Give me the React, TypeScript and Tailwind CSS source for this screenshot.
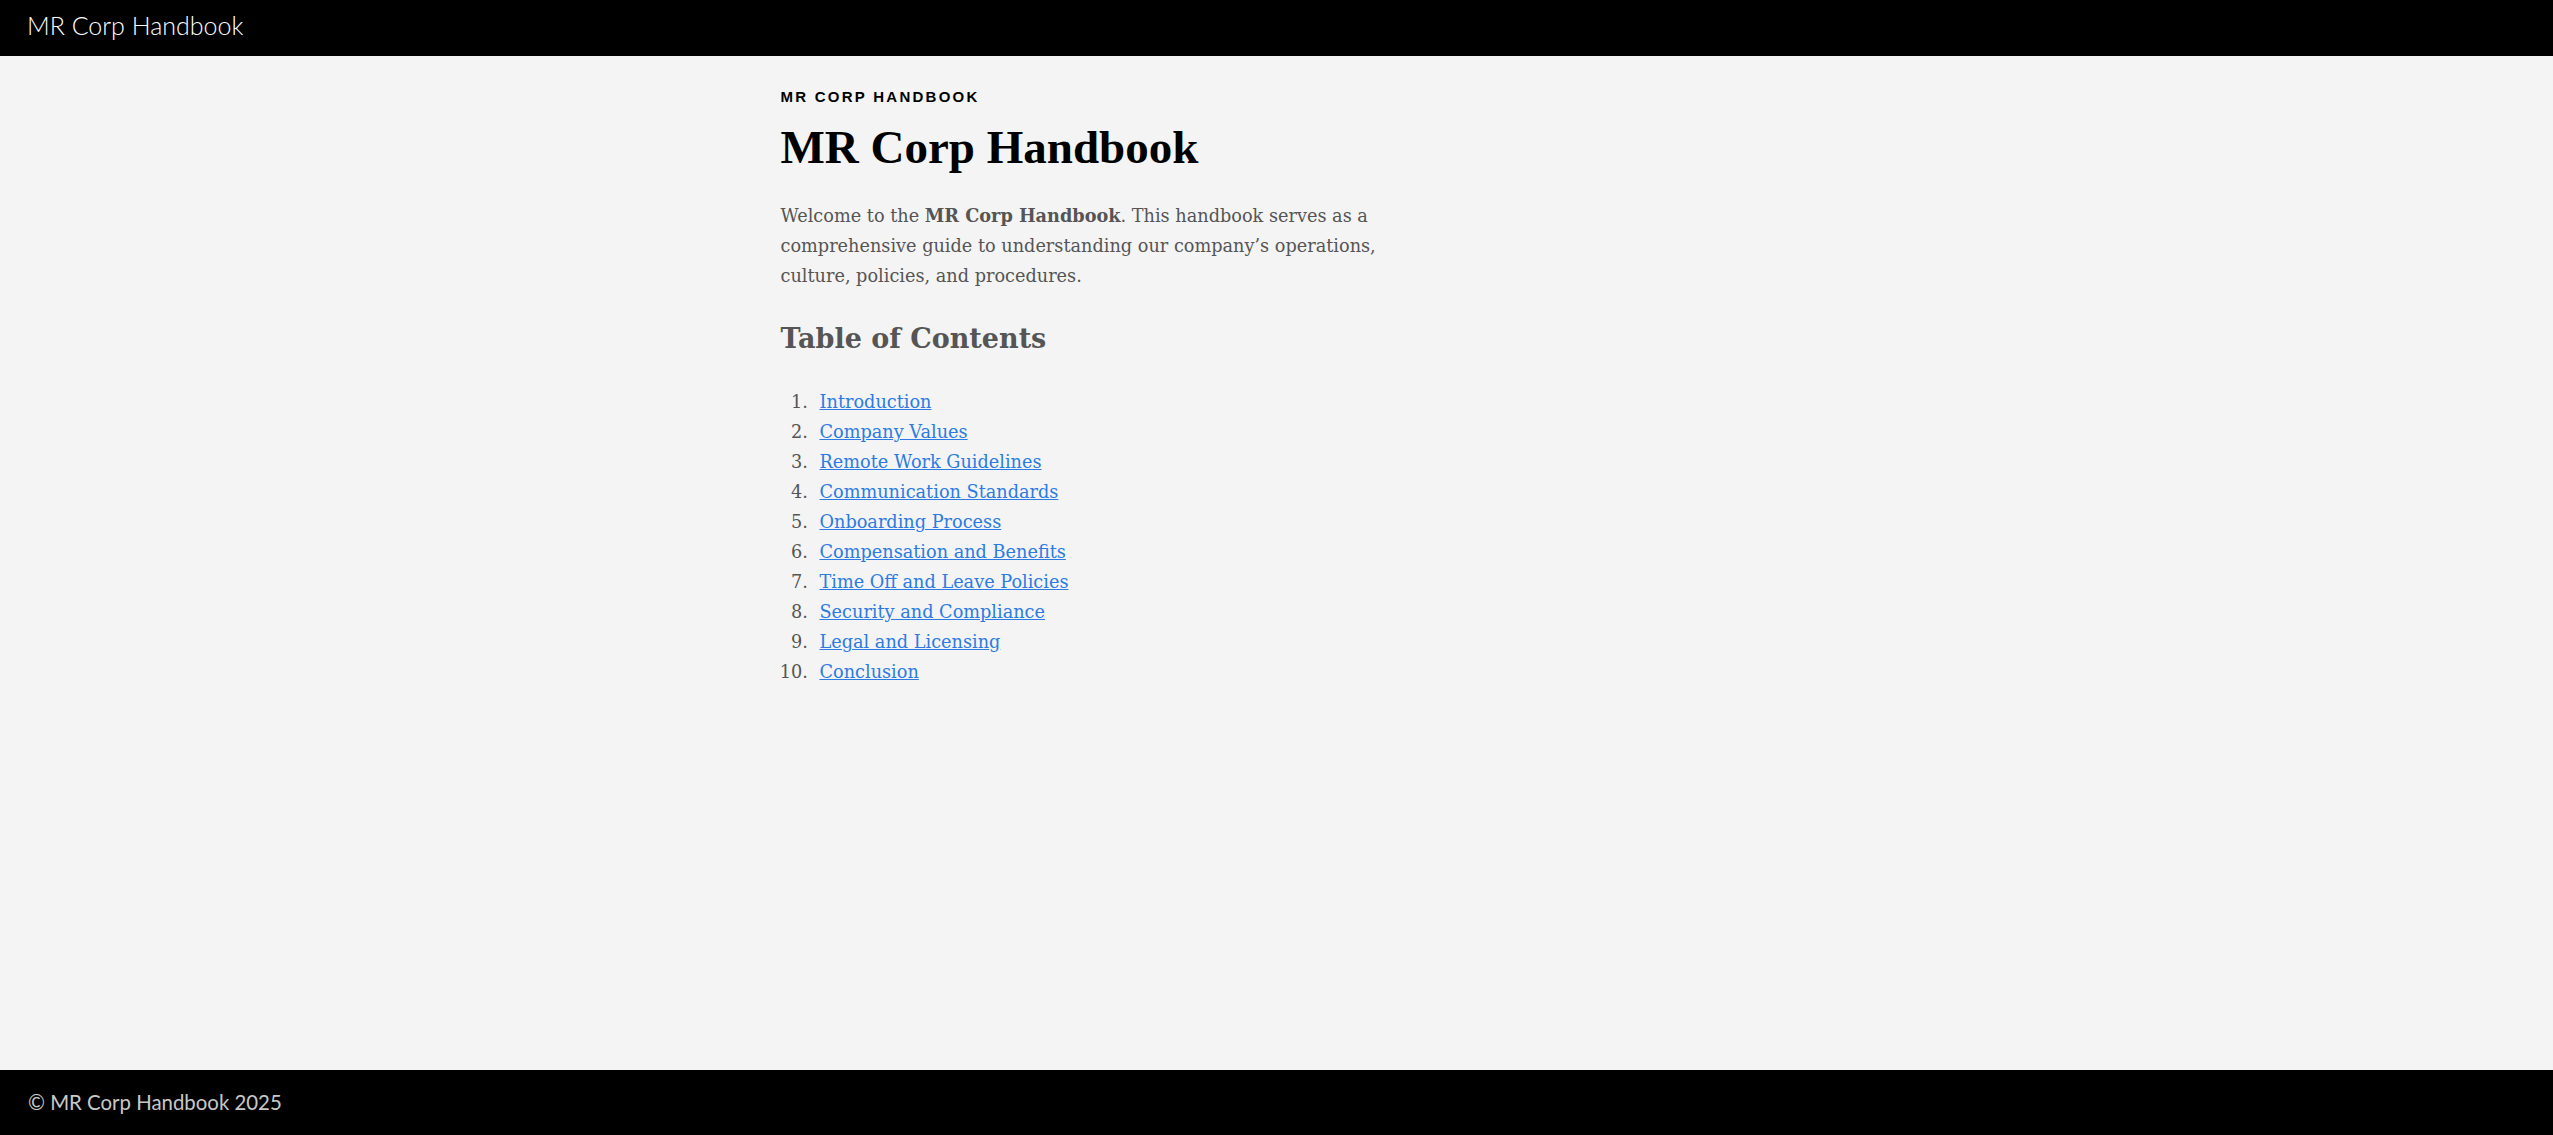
const SECTIONS = [
  "Introduction",
  "Company Values",
  "Remote Work Guidelines",
  "Communication Standards",
  "Onboarding Process",
  "Compensation and Benefits",
  "Time Off and Leave Policies",
  "Security and Compliance",
  "Legal and Licensing",
  "Conclusion",
];

const slug = (s: string) => "#" + s.toLowerCase().replace(/[^a-z0-9]+/g, "-");

export default function App() {
  return (
    <div className="min-h-screen flex flex-col bg-[#f4f4f4]">
      {/* top bar */}
      <header className="h-[56px] shrink-0 bg-black flex items-center px-[27px] pb-[5px]">
        <span className="text-[25px] font-light text-white font-['Lato',sans-serif] leading-none">
          MR Corp Handbook
        </span>
      </header>

      <main className="flex-1 w-full max-w-[992px] mx-auto pt-[31px] pb-10 font-['DejaVu_Serif',serif]">
        <div className="max-w-[620px]">
          <p className="text-[15px] leading-[20px] font-bold tracking-[0.15em] uppercase text-black font-['Liberation_Sans',sans-serif]">
            MR Corp Handbook
          </p>
          <h1 className="mt-[12px] text-[47px] leading-[1.2] font-bold text-black font-['Liberation_Serif',serif]">
            MR Corp Handbook
          </h1>
          <p className="mt-[26px] text-[17.7px] leading-[30px] text-[#555]">
            Welcome to the <b>MR Corp Handbook</b>. This handbook serves as a comprehensive guide to
            understanding our company’s operations, culture, policies, and procedures.
          </p>
          <h2 className="mt-[30px] text-[27px] leading-[36px] font-bold text-[#555]">Table of Contents</h2>
          <ol className="mt-[30px] list-decimal pl-[33px] text-[17.7px] leading-[30px] text-[#555]">
            {SECTIONS.map((s) => (
              <li key={s} className="pl-[6px]">
                <a href={slug(s)} className="text-[#2b7be3] underline">
                  {s}
                </a>
              </li>
            ))}
          </ol>
        </div>
      </main>

      <footer className="h-[65px] shrink-0 bg-black flex items-center px-[28px]">
        <span className="text-[20.4px] text-[#c8c8c8] font-['Lato',sans-serif]">© MR Corp Handbook 2025</span>
      </footer>
    </div>
  );
}
